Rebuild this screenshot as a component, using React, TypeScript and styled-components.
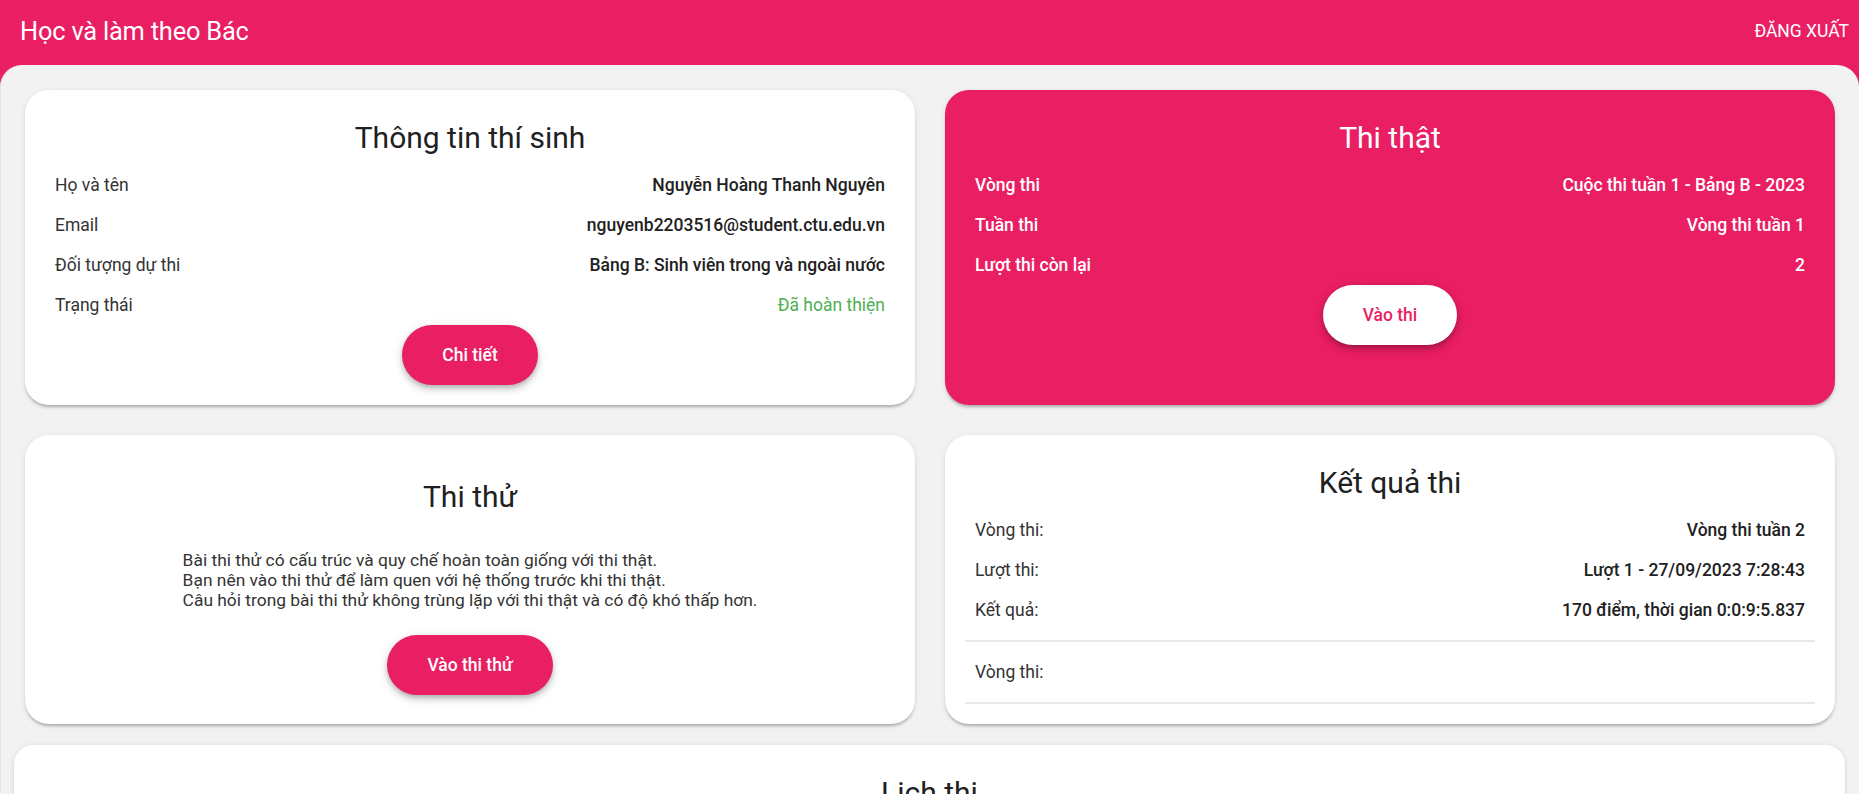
import React from "react";
import styled, { createGlobalStyle } from "styled-components";

const PINK = "#E91E63";

const GlobalStyle = createGlobalStyle`
  html, body {
    margin: 0;
    padding: 0;
    overflow: hidden;
    background: ${PINK};
    font-family: Roboto, "Noto Sans", "Liberation Sans", sans-serif;
  }
  * { box-sizing: border-box; }
`;

const Page = styled.div`
  display: flex;
  flex-direction: column;
  height: 100vh;
  background: ${PINK};
`;

const Header = styled.header`
  height: 65px;
  flex: 0 0 65px;
  display: flex;
  align-items: center;
  justify-content: space-between;
  padding: 0 10px 3px 20px;
  color: #fff;
`;

const AppTitle = styled.h1`
  margin: 0;
  font-size: 25.4px;
  font-weight: 400;
  letter-spacing: -0.2px;
`;

const LogoutButton = styled.button`
  background: transparent;
  border: none;
  color: #fff;
  font-family: inherit;
  font-size: 17.5px;
  font-weight: 400;
  padding: 0;
  cursor: pointer;
`;

const Main = styled.main`
  flex: 1;
  background: #f2f2f2;
  border-radius: 22px 22px 0 0;
  border-left: 1px solid #e6e6e6;
  padding: 25px 14px 0 13px;
  overflow: hidden;
`;

const Grid = styled.div`
  display: grid;
  grid-template-columns: 1fr 1fr;
  gap: 30px;
  padding: 0 10px 0 11px;
`;

const Card = styled.section<{ $accent?: boolean }>`
  display: flex;
  flex-direction: column;
  background: ${(p) => (p.$accent ? PINK : "#fff")};
  color: ${(p) => (p.$accent ? "#fff" : "#212121")};
  border-radius: 24px;
  padding: 20px 30px;
  box-shadow: 0 3px 3px -1px rgba(0, 0, 0, 0.25), 0 1px 6px rgba(0, 0, 0, 0.08);
`;

const ScheduleCard = styled(Card)`
  margin-top: 20px;
  border-radius: 20px;
  border-top: 1px solid #e8e8e8;
  min-height: 200px;
`;

const CardTitle = styled.h2`
  margin: 10px 0 9px;
  font-size: 30px;
  line-height: 36px;
  font-weight: 400;
  text-align: center;
`;

const PracticeTitle = styled(CardTitle)`
  margin: 24px 0 35px;
`;

const Row = styled.div`
  display: flex;
  justify-content: space-between;
  align-items: center;
  height: 40px;
  font-size: 17.5px;
`;

const Label = styled.span<{ $accent?: boolean }>`
  color: ${(p) => (p.$accent ? "#fff" : "#333")};
  font-weight: ${(p) => (p.$accent ? 500 : 400)};
`;

const Value = styled.span<{ $tone?: "success" | "light" }>`
  font-weight: ${(p) => (p.$tone === "success" ? 400 : 500)};
  color: ${(p) =>
    p.$tone === "success" ? "#4CAF50" : p.$tone === "light" ? "#fff" : "#212121"};
`;

const PillButton = styled.button<{ $inverse?: boolean }>`
  align-self: center;
  height: 60px;
  padding: 0 40px;
  border: none;
  border-radius: 30px;
  background: ${(p) => (p.$inverse ? "#fff" : PINK)};
  color: ${(p) => (p.$inverse ? PINK : "#fff")};
  font-family: inherit;
  font-size: 17.5px;
  font-weight: 500;
  cursor: pointer;
  box-shadow: 0 3px 5px -1px rgba(0, 0, 0, 0.2), 0 5px 8px rgba(0, 0, 0, 0.12),
    0 1px 12px rgba(0, 0, 0, 0.08);
`;

const Description = styled.p`
  align-self: center;
  margin: 0 0 25px;
  font-size: 17.4px;
  line-height: 20px;
  color: #333;
  text-align: left;
`;

const ResultGroup = styled.div<{ $pad?: boolean }>`
  margin: 0 -10px;
  padding: ${(p) => (p.$pad ? "10px" : "0")} 10px 10px;
  border-bottom: 2px solid #e8e8e8;
`;

const infoRows = [
  { label: "Họ và tên", value: "Nguyễn Hoàng Thanh Nguyên" },
  { label: "Email", value: "nguyenb2203516@student.ctu.edu.vn" },
  { label: "Đối tượng dự thi", value: "Bảng B: Sinh viên trong và ngoài nước" },
  { label: "Trạng thái", value: "Đã hoàn thiện", tone: "success" as const },
];

const examRows = [
  { label: "Vòng thi", value: "Cuộc thi tuần 1 - Bảng B - 2023" },
  { label: "Tuần thi", value: "Vòng thi tuần 1" },
  { label: "Lượt thi còn lại", value: "2" },
];

const resultRows = [
  { label: "Vòng thi:", value: "Vòng thi tuần 2" },
  { label: "Lượt thi:", value: "Lượt 1 - 27/09/2023 7:28:43" },
  { label: "Kết quả:", value: "170 điểm, thời gian 0:0:9:5.837" },
];

export default function App() {
  return (
    <Page>
      <GlobalStyle />
      <Header>
        <AppTitle>Học và làm theo Bác</AppTitle>
        <LogoutButton>ĐĂNG XUẤT</LogoutButton>
      </Header>
      <Main>
        <Grid>
          <Card>
            <CardTitle>Thông tin thí sinh</CardTitle>
            {infoRows.map((r) => (
              <Row key={r.label}>
                <Label>{r.label}</Label>
                <Value $tone={r.tone}>{r.value}</Value>
              </Row>
            ))}
            <PillButton>Chi tiết</PillButton>
          </Card>
          <Card $accent>
            <CardTitle>Thi thật</CardTitle>
            {examRows.map((r) => (
              <Row key={r.label}>
                <Label $accent>{r.label}</Label>
                <Value $tone="light">{r.value}</Value>
              </Row>
            ))}
            <PillButton $inverse>Vào thi</PillButton>
          </Card>
          <Card>
            <PracticeTitle>Thi thử</PracticeTitle>
            <Description>
              Bài thi thử có cấu trúc và quy chế hoàn toàn giống với thi thật.
              <br />
              Bạn nên vào thi thử để làm quen với hệ thống trước khi thi thật.
              <br />
              Câu hỏi trong bài thi thử không trùng lặp với thi thật và có độ khó thấp hơn.
            </Description>
            <PillButton>Vào thi thử</PillButton>
          </Card>
          <Card>
            <CardTitle>Kết quả thi</CardTitle>
            <ResultGroup>
              {resultRows.map((r) => (
                <Row key={r.label}>
                  <Label>{r.label}</Label>
                  <Value>{r.value}</Value>
                </Row>
              ))}
            </ResultGroup>
            <ResultGroup $pad>
              <Row>
                <Label>Vòng thi:</Label>
              </Row>
            </ResultGroup>
          </Card>
        </Grid>
        <ScheduleCard>
          <CardTitle>Lịch thi</CardTitle>
        </ScheduleCard>
      </Main>
    </Page>
  );
}
